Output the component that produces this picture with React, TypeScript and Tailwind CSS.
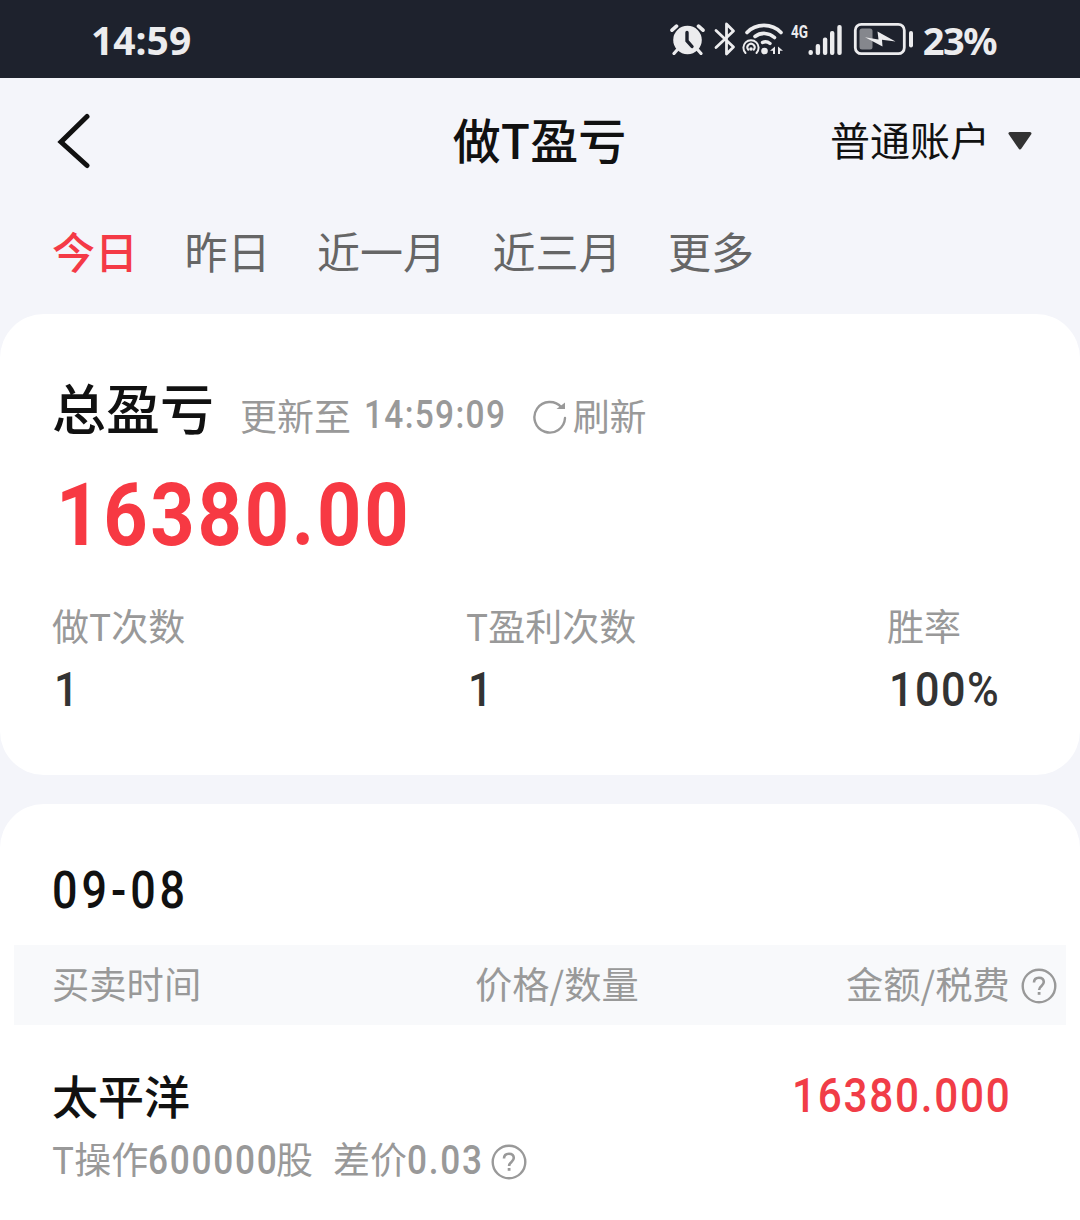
import type { ReactNode } from "react";
import clsx from "clsx";

const tabs = ["今日", "昨日", "近一月", "近三月", "更多"];

const stats = [
  { label: "做T次数", value: "1" },
  { label: "T盈利次数", value: "1" },
  { label: "胜率", value: "100%" },
];

// narrow digits: Roboto squeezed horizontally, with the tracking opened up again
const Num = ({ className, children }: { className?: string; children: ReactNode }) => (
  <span className={clsx("inline-block scale-x-[0.88] font-['Roboto',sans-serif]", className)}>{children}</span>
);

const HelpIcon = ({ className }: { className?: string }) => (
  <svg viewBox="0 0 36 36" fill="none" stroke="#999999" className={clsx("w-9 h-9 shrink-0", className)}>
    <circle cx="18" cy="18" r="16.3" strokeWidth="2.4" />
    <path d="M13 14.600c0-3 2-4.800 4.900-4.800s4.900 1.700 4.900 4.300c0 3.800-4.700 3.800-4.700 7.800" strokeWidth="2.6" />
    <path d="M18.100 24v2.800" strokeWidth="2.8" />
  </svg>
);

const StatusBar = () => (
  <header className="flex items-center justify-between h-[78px] pl-[91px] pr-[84px] bg-[#1e222d] text-[#ececee]">
    <span className="font-['Noto_Sans',sans-serif] font-bold text-[39px] leading-none">14:59</span>
    <div className="flex items-center">
      <svg viewBox="0 0 36 32" className="w-9 h-8" fill="none" stroke="currentColor" strokeLinecap="round">
        <circle cx="17.500" cy="17" r="14.3" fill="currentColor" stroke="none" />
        <path d="M2 7.2 6.500 3.2M33 7.2 28.500 3.2" strokeWidth="3.6" />
        <path d="M7.500 26.500 4 30.500M27.500 26.500l3.500 4" strokeWidth="3.2" />
        <path d="M17 9.500v8.300l5 5.700" stroke="#1e222d" strokeWidth="3.4" />
      </svg>
      <svg
        viewBox="0 0 22 34"
        className="w-[22px] h-[34px] ml-2"
        fill="none"
        stroke="currentColor"
        strokeWidth="2.8"
        strokeLinecap="round"
        strokeLinejoin="round"
      >
        <path d="M2 8.500 19.500 25 12.500 32V2L19.500 9 2 25.500" />
      </svg>
      <svg viewBox="0 0 42 34" className="w-[42px] h-[34px] ml-[6px]" fill="none" stroke="currentColor" strokeLinecap="round">
        <path d="M5 10.500C14 1 30 1 39 10.500" strokeWidth="3.600" />
        <path d="M13 14.500C19 10 27 10.500 32.500 15.500" strokeWidth="3.600" />
        <path d="M20.500 20.500c3-1.500 5-1 7.500 1" strokeWidth="3.400" />
        <circle cx="22.500" cy="29" r="3.300" fill="currentColor" stroke="none" />
        <path d="M3.500 31A7.600 7.600 0 1 1 14.500 31" strokeWidth="2" />
        <path d="M6.300 27.800A3.600 3.600 0 1 1 11.700 27.800" strokeWidth="2" />
        <circle cx="9" cy="27" r="1.800" fill="currentColor" stroke="none" />
        <path d="M33 24.500V32h-2v-3.300h-3zM36 24.500l5 4.200h-3V32h-2z" fill="currentColor" stroke="none" />
      </svg>
      <svg viewBox="0 0 54 34" className="w-[54px] h-[34px] ml-[5px] overflow-visible" fill="currentColor">
        <text
          x="2"
          y="16"
          textLength="17"
          lengthAdjust="spacingAndGlyphs"
          className="font-['Roboto',sans-serif] font-bold text-[19px]"
        >
          4G
        </text>
        <rect x="19.500" y="28" width="4.400" height="5" rx="2" />
        <rect x="26.700" y="22" width="4.400" height="11" rx="2" />
        <rect x="33.900" y="15.500" width="4.400" height="17.500" rx="2" />
        <rect x="41" y="9" width="4.400" height="24" rx="2" />
        <rect x="48.300" y="3" width="4.400" height="30" rx="2" />
      </svg>
      <svg viewBox="0 0 62 34" className="w-[62px] h-[34px] ml-[10px]" fill="none">
        <rect x="2.300" y="2.300" width="49" height="29.400" rx="6" stroke="currentColor" strokeWidth="2.800" />
        <rect x="6.500" y="6.500" width="13" height="21" rx="2.500" fill="#85878d" />
        <path d="M12 15.200 25.500 17.500 24.500 9.500 42.500 19.500 29 17.800 29.500 24.500z" fill="currentColor" />
        <rect x="56" y="9" width="4" height="16.500" rx="2" fill="currentColor" />
      </svg>
      <span className="font-['Noto_Sans',sans-serif] font-bold text-[38px] leading-none tracking-[-1.500px] pt-px ml-2">
        23%
      </span>
    </div>
  </header>
);

const App = () => {
  return (
    <main className="w-[1080px] h-[1220px] overflow-hidden flex flex-col bg-[#f4f5fa] text-[#111111] whitespace-nowrap font-['Noto_Sans_CJK_SC',sans-serif]">
      <StatusBar />

      <nav className="grid grid-cols-[1fr_auto_1fr] items-center h-[124px] pl-[56px] pr-[57px]">
        <svg
          viewBox="0 0 36 56"
          className="w-9 h-14 mt-px"
          fill="none"
          stroke="#111111"
          strokeWidth="5"
          strokeLinecap="round"
        >
          <path d="M31 3.500 5 29 31 52.500" />
        </svg>
        <h1 className="pb-[4px] font-medium text-[48px] leading-none">做T盈亏</h1>
        <button className="flex items-center justify-end gap-[17px] -mr-[10px] text-[40px] leading-none">
          <span className="pb-0.5">普通账户</span>
          <svg viewBox="0 0 26 20" className="w-[26px] h-5 mt-0.5" fill="#333333" stroke="#333333">
            <path d="M3 2.500h20L13 17z" strokeWidth="3" strokeLinejoin="round" />
          </svg>
        </button>
      </nav>

      <div className="flex gap-[46.500px] h-28 pt-[26px] pl-[52px] text-[43px] leading-none text-[#666666]">
        {tabs.map((tab, i) => (
          <button key={tab} className={clsx("h-11", i === 0 && "font-medium text-[#f43a46]")}>
            {tab}
          </button>
        ))}
      </div>

      <section className="h-[461px] shrink-0 pt-[57px] px-[52px] bg-white rounded-[44px]">
        <div className="flex items-center h-[76px]">
          <h2 className="pb-[4px] font-medium text-[54px] leading-none">总盈亏</h2>
          <div className="flex items-center pt-3 ml-[26px] text-[37px] leading-none text-[#999999]">
            更新至
            <Num className="origin-left ml-[13px] -mr-[17px] font-medium text-[38px] tracking-[1.500px]">14:59:09</Num>
            <svg
              viewBox="0 0 36 36"
              className="w-9 h-9 mt-[3px] ml-[23px]"
              fill="none"
              stroke="#999999"
              strokeWidth="2.400"
            >
              <path d="M29.500 8.500A15.300 15.300 0 1 0 33 19" strokeLinecap="round" />
              <path d="M24.500 10h8.500V3.500z" fill="#999999" stroke="none" />
            </svg>
            <span className="ml-[5px]">刷新</span>
          </div>
        </div>

        <div className="flex items-center h-[136px] pl-1 text-[#f73943]">
          <Num className="origin-left font-bold text-[88px] leading-none tracking-[3.100px]">16380.00</Num>
        </div>

        <div className="grid grid-cols-[414px_421px_auto]">
          {stats.map((item) => (
            <div key={item.label}>
              <div className="flex items-center h-[84px] text-[37px] leading-none text-[#999999]">{item.label}</div>
              <div className="flex items-center h-[46px] pb-0.5 pl-0.5 text-[#333333]">
                <Num className="origin-left font-medium text-[49px] leading-none tracking-[1.700px]">{item.value}</Num>
              </div>
            </div>
          ))}
        </div>
      </section>

      <section className="grow mt-[29px] px-[14px] bg-white rounded-t-[44px]">
        <div className="flex items-center h-[141px] pt-8 pl-[38px]">
          <Num className="origin-left font-medium text-[51px] leading-none tracking-[4.500px]">09-08</Num>
        </div>

        <div className="grid grid-cols-[423px_371px_auto] items-center h-20 pb-[3px] pl-[38px] bg-[#f8f9fb] text-[37.3px] leading-none text-[#999999]">
          <span>买卖时间</span>
          <span>价格/数量</span>
          <span className="flex items-center gap-[11px]">
            金额/税费
            <HelpIcon className="mt-[4px]" />
          </span>
        </div>

        <div className="flex items-center justify-between h-[60px] mt-[41px] pl-[38px] pr-[54px]">
          <h3 className="pb-[4px] font-medium text-[46px] leading-none">太平洋</h3>
          <Num className="origin-right font-medium text-[48px] leading-none tracking-[2px] text-[#f13d47]">
            16380.000
          </Num>
        </div>
        <div className="flex items-center h-[69px] pl-[38px] text-[37px] leading-none text-[#999999]">
          <span>
            T操作
            <Num className="origin-left -mr-[20.500px] font-medium text-[40px] tracking-[2px]">600000</Num>股
          </span>
          <span className="ml-5">
            差价<Num className="origin-left -mr-[11.500px] font-medium text-[40px] tracking-[2px]">0.03</Num>
          </span>
          <HelpIcon className="mt-[3px] ml-2" />
        </div>
      </section>
    </main>
  );
};

export default App;
